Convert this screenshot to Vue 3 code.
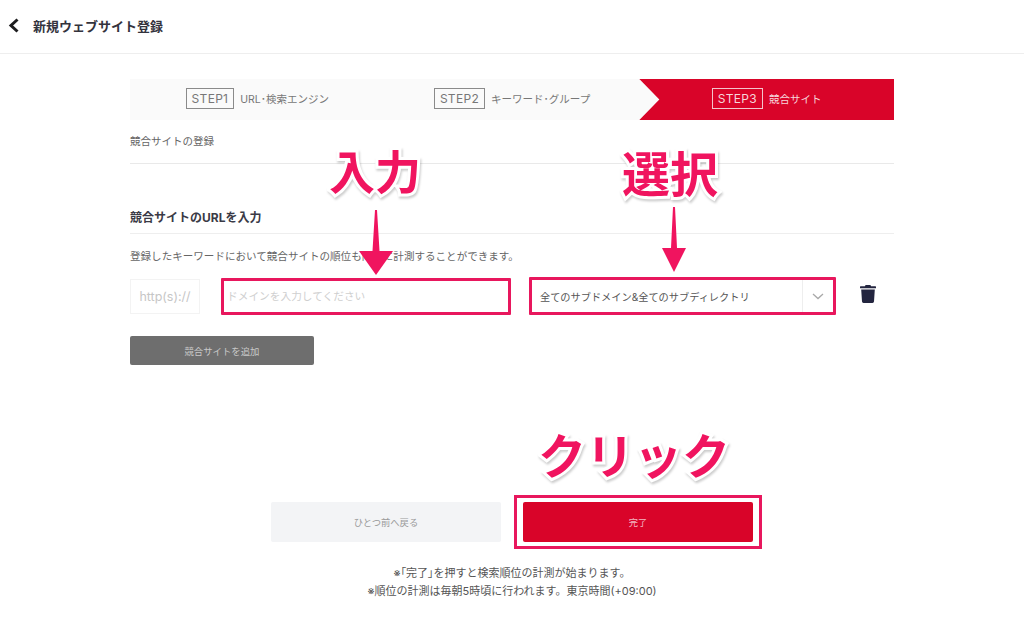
<template>
  <div class="page">
    <header class="top-bar">
      <svg class="back" width="12" height="15" viewBox="0 0 12 15"><path d="M9.5 1.5 3 7.500l6.500 6" fill="none" stroke="#1d1d1f" stroke-width="3" /></svg>
      <h1>新規ウェブサイト登録</h1>
    </header>

    <main class="content">
      <ol class="steps">
        <li v-for="step in steps" :key="step.no" class="step" :class="{ active: step.active }">
          <span class="step-no">STEP{{ step.no }}</span>
          <span>{{ step.label }}</span>
        </li>
      </ol>

      <div class="sub-title">競合サイトの登録</div>
      <h2>競合サイトのURLを入力</h2>
      <p class="desc">登録したキーワードにおいて競合サイトの順位も同時に計測することができます。</p>

      <div class="url-row">
        <div class="scheme">http(s)://</div>
        <input class="domain" type="text" placeholder="ドメインを入力してください" />
        <div class="scope">
          <span class="scope-text">全てのサブドメイン&amp;全てのサブディレクトリ</span>
          <span class="scope-arrow">
            <svg width="12" height="7" viewBox="0 0 12 7"><path d="M1 1l5 4.600L11 1" fill="none" stroke="#a9a9a9" stroke-width="1.300" /></svg>
          </span>
        </div>
        <svg class="trash" width="16" height="18" viewBox="0 0 16 18">
          <path fill="#23253f" d="M5.600 0h4.800l.7 1.200h4.300a.6.6 0 0 1 .6.6v1.400H0V1.800a.6.6 0 0 1 .6-.6h4.300zM1.200 4.400h13.600l-.8 12.200a1.500 1.500 0 0 1-1.500 1.400H3.500A1.500 1.500 0 0 1 2 16.600z" />
        </svg>
      </div>

      <button class="add" type="button">競合サイトを追加</button>

      <div class="actions">
        <button class="prev" type="button">ひとつ前へ戻る</button>
        <button class="done" type="button">完了<span class="done-mark"></span></button>
      </div>

      <p class="note"><span class="tight">※「完了」</span>を押すと検索順位の計測が始まります。<br />※順位の計測は毎朝5時頃に行われます。東京時間(+09:00)</p>
    </main>

    <div class="callout callout-input">入力</div>
    <div class="callout callout-select">選択</div>
    <div class="callout callout-click">クリック</div>

    <svg class="arrow arrow-input" width="36" height="66" viewBox="0 0 36 66"><path d="M17 0h2l2.500 41H35L18 65 1 41h13.500z" fill="#f0145f" /></svg>
    <svg class="arrow arrow-select" width="24" height="66" viewBox="0 0 24 66"><path d="M11 0h2l2 41h9L12 65 0 41h9z" fill="#f0145f" /></svg>
  </div>
</template>

<script setup>
const steps = [
  { no: 1, label: 'URL･検索エンジン' },
  { no: 2, label: 'キーワード･グループ' },
  { no: 3, label: '競合サイト', active: true },
]
</script>

<style>
body {
  background: #fff;
}
</style>

<style scoped>
.page {
  position: relative;
  width: 1024px;
  height: 625px;
  overflow: hidden;
  background: #fff;
  color: #555;
  font-family: Inter, "Noto Sans CJK JP", sans-serif;
}

.top-bar {
  display: flex;
  align-items: center;
  height: 54px;
  padding: 0 0 3px 8px;
  border-bottom: 1px solid #eeeeee;
  box-sizing: border-box;
}

.back {
  margin-right: 13px;
}

.top-bar h1 {
  margin: 0;
  font-size: 13px;
  font-weight: 700;
  color: #33333d;
}

.content {
  width: 764px;
  margin-left: 130px;
}

.steps {
  display: flex;
  height: 41px;
  margin: 25px 0 0;
  padding: 0;
  list-style: none;
  background: #fafafa;
  font-size: 10.5px;
  color: #777;
}

.step {
  flex: 1;
  display: flex;
  align-items: center;
  justify-content: center;
  gap: 6px;
  padding-bottom: 2px;
  box-sizing: border-box;
}

.step-no {
  padding: 2px 5px;
  border: 1px solid #8a8a8a;
  font-size: 12px;
  line-height: 15px;
  letter-spacing: 0.3px;
}

.step.active {
  background: #d90429;
  color: #f6d5da;
  clip-path: polygon(0 0, 100% 0, 100% 100%, 0 100%, 20px 50%);
}

.step.active .step-no {
  border-color: #f3c3cb;
}

.sub-title {
  height: 44px;
  padding-top: 14px;
  border-bottom: 1px solid #e9e9e9;
  box-sizing: border-box;
  font-size: 10.5px;
  line-height: 16px;
  color: #666;
}

h2 {
  height: 70px;
  margin: 0;
  padding-top: 45px;
  border-bottom: 1px solid #eeeeee;
  box-sizing: border-box;
  font-size: 12px;
  line-height: 18px;
  font-weight: 700;
  color: #3a3a46;
}

.desc {
  margin: 15px 0 0;
  font-size: 10.55px;
  line-height: 16px;
  color: #666;
}

.url-row {
  display: flex;
  align-items: center;
  height: 38px;
  margin-top: 12px;
}

.scheme {
  width: 70px;
  height: 35px;
  border: 1px solid #f3f3f3;
  box-sizing: border-box;
  font-size: 12.5px;
  line-height: 33px;
  text-align: center;
  color: #c6c6c6;
}

.domain {
  width: 290px;
  height: 37px;
  margin-left: 21px;
  padding: 0 3px;
  border: 3px solid #e8175d;
  border-radius: 1px;
  outline: none;
  box-sizing: border-box;
  font: 10.7px Inter, "Noto Sans CJK JP", sans-serif;
}

.domain::placeholder {
  color: #cfcfcf;
}

.scope {
  display: flex;
  align-items: center;
  width: 307px;
  height: 38px;
  margin-left: 18px;
  border: 3px solid #e8175d;
  border-radius: 1px;
  box-sizing: border-box;
  font-size: 10.2px;
  color: #555;
}

.scope-text {
  flex: 1;
  padding-left: 8px;
}

.scope-arrow {
  display: flex;
  align-items: center;
  justify-content: center;
  width: 30px;
  height: 100%;
  border-left: 1px solid #eeeeee;
}

.trash {
  margin: -5px 0 0 24px;
}

.add {
  display: block;
  width: 184px;
  height: 29px;
  margin-top: 21px;
  border: none;
  border-radius: 2px;
  background: #6e6e6e;
  color: #c9c9c9;
  font: 9.4px Inter, "Noto Sans CJK JP", sans-serif;
}

.actions {
  display: flex;
  gap: 22px;
  margin: 137px 0 0 141px;
}

.prev,
.done {
  position: relative;
  width: 230px;
  height: 40px;
  border: none;
  border-radius: 2px;
  font: 9.3px Inter, "Noto Sans CJK JP", sans-serif;
}

.prev {
  background: #f3f4f6;
  color: #9a9a9a;
}

.done {
  background: #d90429;
  color: #f2b6c0;
}

.done-mark {
  position: absolute;
  inset: -7px -9px;
  border: 3px solid #e8175d;
}

.note {
  margin: 22px 0 0;
  font-size: 11px;
  line-height: 18px;
  text-align: center;
  color: #555;
}

.tight {
  font-feature-settings: "palt";
}

.callout {
  position: absolute;
  font-family: "Noto Sans CJK JP", sans-serif;
  font-weight: 700;
  line-height: 1;
  color: #f0145f;
  -webkit-text-stroke: 6px #fff;
  paint-order: stroke fill;
  filter: drop-shadow(1px 2px 1px rgba(0, 0, 0, 0.2));
  white-space: nowrap;
}

.callout-input {
  left: 329px;
  top: 146px;
  font-size: 46px;
}

.callout-select {
  left: 622px;
  top: 147px;
  font-size: 48px;
}

.callout-click {
  left: 538px;
  top: 429px;
  font-size: 48px;
}

.arrow {
  position: absolute;
}

.arrow-input {
  left: 358px;
  top: 210px;
}

.arrow-select {
  left: 662px;
  top: 207px;
}
</style>
